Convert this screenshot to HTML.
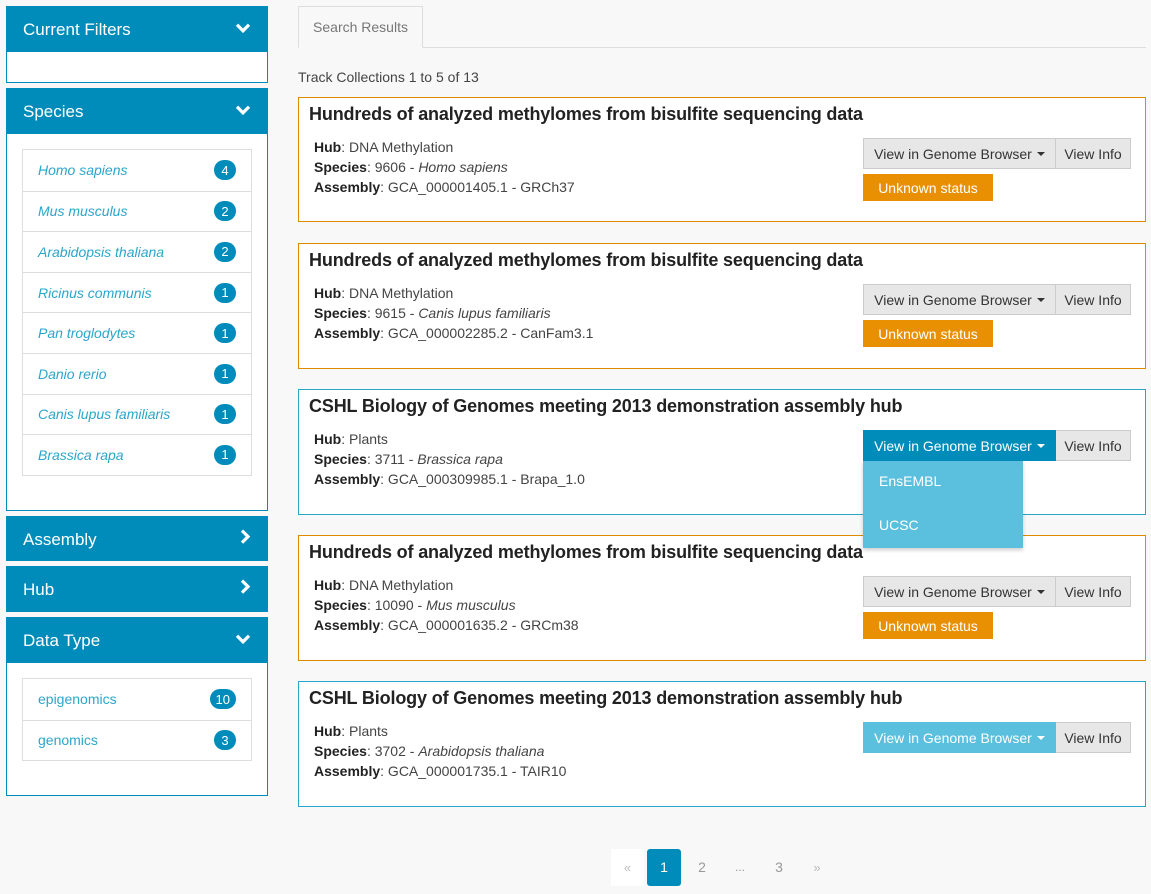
<!DOCTYPE html>
<html><head><meta charset="utf-8"><style>
*{box-sizing:border-box;margin:0;padding:0}
body{width:1151px;height:894px;background:#f8f8f8;font-family:"Liberation Sans",sans-serif;font-size:14px;color:#333;position:relative;overflow:hidden}
.abs{position:absolute}
.ph{position:absolute;left:6px;width:262px;background:#008cba;color:#fff;font-size:17px;padding-left:16px;border:1px solid #008cba}
.ph svg{position:absolute;right:16px;top:50%;transform:translateY(-60%)}
.pb{position:absolute;left:6px;width:262px;background:#fff;border:1px solid #008cba;border-top:none}
.list{position:absolute;left:15px;width:230px;border:1px solid #ddd}
.li{height:40.6px;border-top:1px solid #ddd;display:flex;align-items:center;justify-content:space-between;padding:0 15px;color:#2ba6cb;font-size:14px}
.li:first-child{border-top:none}
.badge{background:#008cba;color:#fff;border-radius:11px;min-width:22px;height:20px;font-size:13px;display:flex;align-items:center;justify-content:center;padding:0 6px;font-style:normal}
.card{position:absolute;left:298px;width:848px;background:#fff;border:1px solid}
.card h3{position:absolute;left:10px;top:6px;font-size:18px;font-weight:bold;color:#222;letter-spacing:-0.15px}
.card .info{position:absolute;left:15px;top:39px;line-height:20px;font-size:14px;color:#444}
.card .info b{color:#222}
.btns{position:absolute;left:564px;top:40px;display:flex;height:31px}
.b1{width:193px;background:#e7e7e7;border:1px solid #ccc;display:flex;align-items:center;justify-content:center;color:#333;font-size:14px}
.b2{width:75px;background:#e7e7e7;border:1px solid #ccc;border-left:none;display:flex;align-items:center;justify-content:center;color:#333}
.unk{position:absolute;left:564px;top:76px;width:130px;height:27px;background:#e99002;color:#fff;display:flex;align-items:center;justify-content:center}
.caret{display:inline-block;border-left:4px solid transparent;border-right:4px solid transparent;border-top:4px solid currentColor;margin-left:5px;vertical-align:middle}
</style></head><body>
<div class="ph" style="top:6px;height:46px;line-height:46px">Current Filters<svg width="16" height="12" viewBox="0 0 16 12"><path d="M2 3 L8 9 L14 3" stroke="#fff" stroke-width="3.2" fill="none"/></svg></div>
<div class="pb" style="top:52px;height:31px"></div>
<div class="ph" style="top:88px;height:46px;line-height:46px">Species<svg width="16" height="12" viewBox="0 0 16 12"><path d="M2 3 L8 9 L14 3" stroke="#fff" stroke-width="3.2" fill="none"/></svg></div>
<div class="pb" style="top:134px;height:377px">
<div class="list" style="top:15px">
<div class="li"><i>Homo sapiens</i><span class="badge">4</span></div>
<div class="li"><i>Mus musculus</i><span class="badge">2</span></div>
<div class="li"><i>Arabidopsis thaliana</i><span class="badge">2</span></div>
<div class="li"><i>Ricinus communis</i><span class="badge">1</span></div>
<div class="li"><i>Pan troglodytes</i><span class="badge">1</span></div>
<div class="li"><i>Danio rerio</i><span class="badge">1</span></div>
<div class="li"><i>Canis lupus familiaris</i><span class="badge">1</span></div>
<div class="li"><i>Brassica rapa</i><span class="badge">1</span></div>
</div></div>
<div class="ph" style="top:516px;height:45px;line-height:45px">Assembly<svg width="12" height="16" viewBox="0 0 12 16" style="transform:translateY(-65%)"><path d="M3 2 L9 8 L3 14" stroke="#fff" stroke-width="3.2" fill="none"/></svg></div>
<div class="ph" style="top:566px;height:46px;line-height:46px">Hub<svg width="12" height="16" viewBox="0 0 12 16" style="transform:translateY(-65%)"><path d="M3 2 L9 8 L3 14" stroke="#fff" stroke-width="3.2" fill="none"/></svg></div>
<div class="ph" style="top:617px;height:46px;line-height:46px">Data Type<svg width="16" height="12" viewBox="0 0 16 12"><path d="M2 3 L8 9 L14 3" stroke="#fff" stroke-width="3.2" fill="none"/></svg></div>
<div class="pb" style="top:663px;height:133px">
<div class="list" style="top:15px">
<div class="li">epigenomics<span class="badge">10</span></div>
<div class="li">genomics<span class="badge">3</span></div>
</div></div>

<div class="abs" style="left:298px;top:47px;width:848px;border-top:1px solid #ddd"></div>
<div class="abs" style="left:298px;top:6px;width:125px;height:42px;background:#f8f8f8;border:1px solid #ddd;border-bottom:1px solid #f8f8f8;color:#777;font-size:14px;text-align:center;line-height:40px">Search Results</div>
<div class="abs" style="left:298px;top:69px;font-size:14px;color:#444">Track Collections 1 to 5 of 13</div>

<div class="card" style="top:97px;height:125px;border-color:#e08a00"><h3>Hundreds of analyzed methylomes from bisulfite sequencing data</h3>
<div class="info"><b>Hub</b>: DNA Methylation<br><b>Species</b>: 9606 - <i>Homo sapiens</i><br><b>Assembly</b>: GCA_000001405.1 - GRCh37</div>
<div class="btns"><div class="b1">View in Genome Browser<span class="caret"></span></div><div class="b2">View Info</div></div><div class="unk">Unknown status</div></div>

<div class="card" style="top:243px;height:126px;border-color:#e08a00"><h3>Hundreds of analyzed methylomes from bisulfite sequencing data</h3>
<div class="info"><b>Hub</b>: DNA Methylation<br><b>Species</b>: 9615 - <i>Canis lupus familiaris</i><br><b>Assembly</b>: GCA_000002285.2 - CanFam3.1</div>
<div class="btns"><div class="b1">View in Genome Browser<span class="caret"></span></div><div class="b2">View Info</div></div><div class="unk">Unknown status</div></div>

<div class="card" style="top:389px;height:126px;border-color:#2ba6cb"><h3>CSHL Biology of Genomes meeting 2013 demonstration assembly hub</h3>
<div class="info"><b>Hub</b>: Plants<br><b>Species</b>: 3711 - <i>Brassica rapa</i><br><b>Assembly</b>: GCA_000309985.1 - Brapa_1.0</div>
<div class="btns"><div class="b1" style="background:#008cba;border-color:#008cba;color:#fff">View in Genome Browser<span class="caret"></span></div><div class="b2">View Info</div></div></div>

<div class="card" style="top:535px;height:126px;border-color:#e08a00"><h3>Hundreds of analyzed methylomes from bisulfite sequencing data</h3>
<div class="info"><b>Hub</b>: DNA Methylation<br><b>Species</b>: 10090 - <i>Mus musculus</i><br><b>Assembly</b>: GCA_000001635.2 - GRCm38</div>
<div class="btns"><div class="b1">View in Genome Browser<span class="caret"></span></div><div class="b2">View Info</div></div><div class="unk">Unknown status</div></div>

<div class="card" style="top:681px;height:126px;border-color:#2ba6cb"><h3>CSHL Biology of Genomes meeting 2013 demonstration assembly hub</h3>
<div class="info"><b>Hub</b>: Plants<br><b>Species</b>: 3702 - <i>Arabidopsis thaliana</i><br><b>Assembly</b>: GCA_000001735.1 - TAIR10</div>
<div class="btns"><div class="b1" style="background:#5bc0de;border-color:#5bc0de;color:#fff">View in Genome Browser<span class="caret"></span></div><div class="b2">View Info</div></div></div>

<div class="abs" style="left:863px;top:461px;width:160px;height:87px;background:#5bc0de;color:#fff;box-shadow:0 2px 4px rgba(0,0,0,.2)">
<div style="position:absolute;left:16px;top:12px">EnsEMBL</div><div style="position:absolute;left:16px;top:56px">UCSC</div></div>

<div class="abs" style="left:611px;top:849px;width:33px;height:37px;background:#fff;color:#bbb;text-align:center;line-height:37px;font-size:13px">«</div>
<div class="abs" style="left:647px;top:849px;width:34px;height:37px;background:#008cba;color:#fff;text-align:center;line-height:37px;border-radius:3px">1</div>
<div class="abs" style="left:690px;top:849px;width:24px;height:37px;color:#999;text-align:center;line-height:37px">2</div>
<div class="abs" style="left:728px;top:849px;width:24px;height:37px;color:#999;text-align:center;line-height:37px;font-size:12px">...</div>
<div class="abs" style="left:767px;top:849px;width:24px;height:37px;color:#999;text-align:center;line-height:37px">3</div>
<div class="abs" style="left:805px;top:849px;width:24px;height:37px;color:#bbb;text-align:center;line-height:37px;font-size:13px">»</div>
</body></html>
